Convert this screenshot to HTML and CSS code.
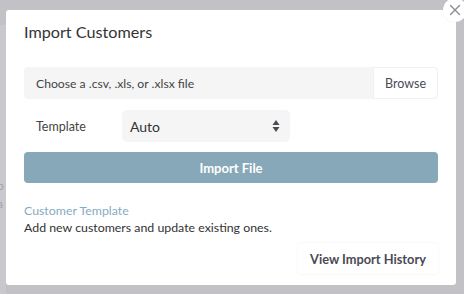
FILE: index.html
```html
<!DOCTYPE html>
<html lang="en">

<head>
    <meta charset="UTF-8">
    <meta name="viewport" content="width=device-width, initial-scale=1.0">
    <title>Import Customers</title>
    <link rel="stylesheet" href="styles.css">
</head>

<body>
    <div class="fundo">
        <span class="fundo-letra">o</span>
        <span class="fundo-letra">a</span>
    </div>

    <div class="modal">
        <button class="fechar" aria-label="Close">
            <svg width="12" height="12" viewBox="0 0 12 12">
                <path d="M1.5 1.5 L10.5 10.5 M10.5 1.5 L1.5 10.5" stroke="#8a8a92" stroke-width="1.4" fill="none" stroke-linecap="round"/>
            </svg>
        </button>

        <h2 class="titulo">Import Customers</h2>

        <div class="arquivo">
            <span class="arquivo-texto">Choose a .csv, .xls, or .xlsx file</span>
            <span class="browse">Browse</span>
        </div>

        <div class="linha-template">
            <label class="rotulo">Template</label>
            <div class="select">
                <span>Auto</span>
                <svg width="8" height="14" viewBox="0 0 8 14">
                    <path d="M4 1 L7.5 6 L0.5 6 Z" fill="#4a4a55"/>
                    <path d="M4 13 L7.5 8 L0.5 8 Z" fill="#4a4a55"/>
                </svg>
            </div>
        </div>

        <button class="importar">Import File</button>

        <div class="info">
            <a class="link" href="#">Customer Template</a>
            <p class="descricao">Add new customers and update existing ones.</p>
        </div>

        <div class="rodape">
            <button class="historico">View Import History</button>
        </div>
    </div>
</body>

</html>
```

FILE: styles.css
```css
body {
    margin: 0;
    padding: 10px 8px 9px 6px;
    font-family: 'Lato', 'Open Sans', sans-serif;
    background-color: #c2c2c6;
    color: #333;
    position: relative;
    height: 294px;
    box-sizing: border-box;
    overflow: hidden;
}

.fundo {
    position: absolute;
    left: 0;
    top: 25px;
    width: 6px;
    bottom: 0;
    background-color: #c9c9cd;
}

.fundo-letra {
    position: absolute;
    left: -3px;
    font-size: 12px;
    color: #9aa6b4;
}

.fundo-letra:first-child {
    top: 153px;
}

.fundo-letra:last-child {
    top: 171px;
}

.modal {
    position: relative;
    width: 450px;
    height: 275px;
    box-sizing: border-box;
    background-color: #fff;
    border-radius: 3px;
    padding: 10px 18px 0 18px;
    display: flex;
    flex-direction: column;
}

.fechar {
    position: absolute;
    right: -11px;
    top: -12px;
    width: 24px;
    height: 24px;
    border-radius: 50%;
    border: none;
    background-color: #fff;
    padding: 0;
    display: flex;
    align-items: center;
    justify-content: center;
    box-shadow: 0 0 2px rgba(0, 0, 0, 0.08);
}

.titulo {
    margin: 0;
    font-size: 16.2px;
    font-weight: 400;
    line-height: 24px;
    color: #333;
}

.arquivo {
    margin-top: 23px;
    height: 32px;
    display: flex;
    align-items: stretch;
    background-color: #f5f5f5;
    border-radius: 4px;
}

.arquivo-texto {
    flex: 1;
    display: flex;
    align-items: center;
    padding-left: 12px;
    font-size: 12.2px;
    color: #444;
}

.browse {
    width: 63px;
    display: flex;
    align-items: center;
    justify-content: center;
    background-color: #fff;
    border: 1px solid #f0f0f0;
    border-radius: 0 4px 4px 0;
    font-size: 12.5px;
    color: #4a4a55;
}

.linha-template {
    margin-top: 11px;
    display: flex;
    align-items: center;
}

.rotulo {
    width: 86px;
    padding-left: 12px;
    font-size: 12.5px;
    color: #444;
}

.select {
    width: 168px;
    height: 32px;
    box-sizing: border-box;
    background-color: #f5f5f5;
    border-radius: 5px;
    display: flex;
    align-items: center;
    justify-content: space-between;
    padding: 0 10px 0 8px;
    font-size: 14px;
    color: #333;
}

.importar {
    margin-top: 10px;
    height: 31px;
    border: none;
    border-radius: 4px;
    background-color: #87a8b8;
    color: #fff;
    font-family: inherit;
    font-size: 13px;
    font-weight: 700;
}

.info {
    margin-top: 19px;
    font-size: 12.35px;
    line-height: 17px;
}

.link {
    color: #85abc2;
    text-decoration: none;
}

.descricao {
    margin: 0;
    color: #333;
}

.rodape {
    margin-top: 7px;
    display: flex;
    justify-content: flex-end;
}

.historico {
    width: 140px;
    height: 31px;
    border: none;
    border-radius: 3px;
    background-color: #fff;
    box-shadow: 0 0 2px rgba(0, 0, 0, 0.08);
    font-family: inherit;
    font-size: 12.8px;
    font-weight: 700;
    color: #4a4a55;
}
```
